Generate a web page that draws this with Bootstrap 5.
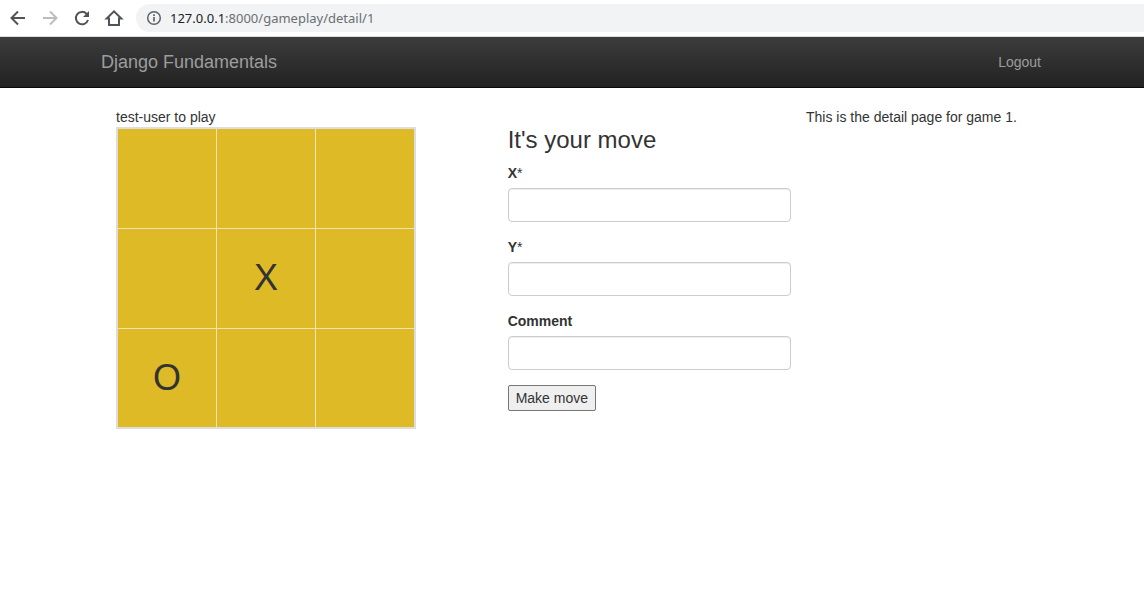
<!DOCTYPE html>
<html lang="en">
<head>
<meta charset="utf-8">
<meta name="viewport" content="width=device-width, initial-scale=1">
<title>Django Fundamentals</title>
<link href="https://cdn.jsdelivr.net/npm/bootstrap@5.3.0/dist/css/bootstrap.min.css" rel="stylesheet">
<style>
body { font: 14px/20px "Liberation Sans", Arial, sans-serif; color: #333; background: #fff; }
.browser-bar { height: 37px; border-bottom: 1px solid #dcdee0; color: #5f6368; gap: 8px; padding-left: 6px; }
.tool-btn { width: 24px; height: 24px; color: #50545a; }
.tool-btn:disabled { color: #babcbe; opacity: 1; }
.address { height: 28px; margin-left: 2px; padding-left: 10px; gap: 8px; background: #f1f3f4; border-radius: 14px 0 0 14px; }
.url { font: 13px/20px "Noto Sans", "Open Sans", sans-serif; color: #6b6f73; }
.url b { font-weight: 400; color: #202124; }
.site-nav { height: 51px; border-bottom: 1px solid #080808; background: linear-gradient(#3c3c3c, #222); }
.site-nav, .site-main { padding-right: 2px; }
.page-width { max-width: 970px; padding: 0 15px; }
.site-nav a { color: #9d9d9d; text-decoration: none; }
.site-nav .brand { font-size: 18px; }
.site-main { padding-top: 19px; }
.pane { padding: 0 15px; }
.board { width: 300px; max-width: 100%; height: 302px; table-layout: fixed; border-collapse: collapse; border: 2px solid #ddd; background: #deba27; }
.board td { border: 1px solid #f0e2b4; padding: 0; height: 100px; text-align: center; vertical-align: middle; font-size: 36px; line-height: 40px; }
h3 { font-size: 24px; line-height: 26px; font-weight: 400; margin: 20px 0 10px; }
.form-label { margin-bottom: 5px; font-weight: 700; display: block; }
.form-control { height: 34px; border-color: #ccc; border-radius: 4px; box-shadow: inset 0 1px 1px rgba(0,0,0,.075); font-size: 14px; }
.field { margin-bottom: 15px; }
.move-btn { height: 26px; padding: 1px 7px; border: 1px solid #767676; border-radius: 2px; background: #efefef; color: #333; }
</style>
</head>
<body>
<div class="browser-bar d-flex align-items-center">
  <button class="tool-btn btn p-0 border-0 d-flex" aria-label="Back"><svg width="24" height="24" fill="none" stroke="currentColor" stroke-width="2"><path d="M19 12H6M12 5.500L5.500 12l6.500 6.500"/></svg></button>
  <button class="tool-btn btn p-0 border-0 d-flex" aria-label="Forward" disabled><svg width="24" height="24" fill="none" stroke="currentColor" stroke-width="2"><path d="M5 12h13M12 5.500l6.500 6.500-6.500 6.500"/></svg></button>
  <button class="tool-btn btn p-0 border-0 d-flex" aria-label="Reload"><svg width="24" height="24" fill="none" stroke="currentColor" stroke-width="2"><path d="M18 14a6.200 6.200 0 1 1-1.500-6.300L18.500 9.800"/><path d="M19 5v6h-6z" fill="currentColor" stroke="none"/></svg></button>
  <button class="tool-btn btn p-0 border-0 d-flex" aria-label="Home"><svg width="24" height="24" fill="none" stroke="currentColor" stroke-width="2"><path d="M7 19v-6.500H4.700L12 5.300l7.300 7.200H17V19z"/></svg></button>
  <div class="address d-flex align-items-center flex-grow-1">
    <svg width="16" height="16" fill="none" stroke="#5f6368" stroke-width="1.500"><circle cx="8" cy="8" r="6.300"/><path d="M8 7v4.500M8 4.300v1.700" stroke-width="1.700"/></svg>
    <span class="url"><b>127.0.0.1</b>:8000/gameplay/detail/1</span>
  </div>
</div>
<nav class="site-nav d-flex align-items-center">
  <div class="page-width container-fluid d-flex justify-content-between align-items-center">
    <a class="brand" href="#">Django Fundamentals</a>
    <a href="#">Logout</a>
  </div>
</nav>
<main class="site-main">
  <div class="page-width container-fluid">
    <div class="row g-0">
      <div class="col-sm-5 pane">
        <div>test-user to play</div>
        <table class="board" aria-label="Game board">
          <tbody>
            <tr><td></td><td></td><td></td></tr>
            <tr><td></td><td>X</td><td></td></tr>
            <tr><td>O</td><td></td><td></td></tr>
          </tbody>
        </table>
      </div>
      <div class="col-sm-4 pane">
        <h3>It's your move</h3>
        <form>
          <div class="field"><label class="form-label" for="move-x">X<span class="fw-normal">*</span></label><input class="form-control" id="move-x" type="text"></div>
          <div class="field"><label class="form-label" for="move-y">Y<span class="fw-normal">*</span></label><input class="form-control" id="move-y" type="text"></div>
          <div class="field"><label class="form-label" for="comment">Comment</label><input class="form-control" id="comment" type="text"></div>
          <button class="move-btn" type="button">Make move</button>
        </form>
      </div>
      <div class="col-sm-3">This is the detail page for game 1.</div>
    </div>
  </div>
</main>
<script src="https://cdn.jsdelivr.net/npm/bootstrap@5.3.0/dist/js/bootstrap.bundle.min.js"></script>
</body>
</html>
